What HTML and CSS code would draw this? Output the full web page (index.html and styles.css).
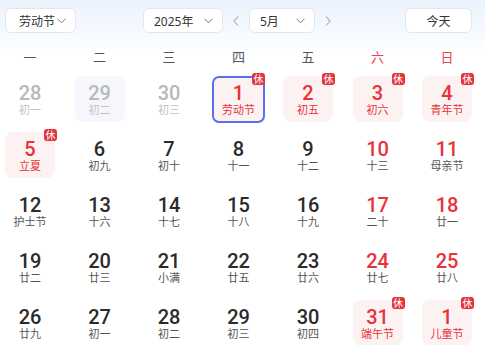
FILE: index.html
```html
<!DOCTYPE html>
<html lang="zh">
<head>
<meta charset="utf-8">
<link rel="stylesheet" href="styles.css">
</head>
<body>
<div class="cal">
  <div class="toolbar">
    <div class="select sel-holiday"><span>劳动节</span><svg class="caret" width="9" height="6" viewBox="0 0 9 6"><path d="M0.5 0.8 L4.5 4.8 L8.5 0.8" fill="none" stroke="#777" stroke-width="1"/></svg></div>
    <div class="select sel-year"><span>2025年</span><svg class="caret" width="9" height="6" viewBox="0 0 9 6"><path d="M0.5 0.8 L4.5 4.8 L8.5 0.8" fill="none" stroke="#777" stroke-width="1"/></svg></div>
    <div class="nav"><svg width="6" height="10" viewBox="0 0 6 10"><path d="M5 0.5 L1 5 L5 9.5" fill="none" stroke="#aaa" stroke-width="1.1"/></svg></div>
    <div class="select sel-month"><span>5月</span><svg class="caret" width="9" height="6" viewBox="0 0 9 6"><path d="M0.5 0.8 L4.5 4.8 L8.5 0.8" fill="none" stroke="#777" stroke-width="1"/></svg></div>
    <div class="nav"><svg width="6" height="10" viewBox="0 0 6 10"><path d="M1 0.5 L5 5 L1 9.5" fill="none" stroke="#aaa" stroke-width="1.1"/></svg></div>
    <div class="today">今天</div>
  </div>
  <div class="grid week">
    <div class="wd">一</div><div class="wd">二</div><div class="wd">三</div><div class="wd">四</div><div class="wd">五</div><div class="wd red">六</div><div class="wd red">日</div>
  </div>
  <div class="grid days">
    <div class="day other"><div class="num">28</div><div class="lunar">初一</div></div>
    <div class="day other hover"><div class="num">29</div><div class="lunar">初二</div></div>
    <div class="day other"><div class="num">30</div><div class="lunar">初三</div></div>
    <div class="day rest red selected"><div class="num">1</div><div class="lunar">劳动节</div><span class="badge">休</span></div>
    <div class="day rest red"><div class="num">2</div><div class="lunar">初五</div><span class="badge">休</span></div>
    <div class="day rest red"><div class="num">3</div><div class="lunar">初六</div><span class="badge">休</span></div>
    <div class="day rest red"><div class="num">4</div><div class="lunar">青年节</div><span class="badge">休</span></div>

    <div class="day rest red"><div class="num">5</div><div class="lunar">立夏</div><span class="badge">休</span></div>
    <div class="day"><div class="num">6</div><div class="lunar">初九</div></div>
    <div class="day"><div class="num">7</div><div class="lunar">初十</div></div>
    <div class="day"><div class="num">8</div><div class="lunar">十一</div></div>
    <div class="day"><div class="num">9</div><div class="lunar">十二</div></div>
    <div class="day red"><div class="num">10</div><div class="lunar">十三</div></div>
    <div class="day red"><div class="num">11</div><div class="lunar">母亲节</div></div>

    <div class="day"><div class="num">12</div><div class="lunar">护士节</div></div>
    <div class="day"><div class="num">13</div><div class="lunar">十六</div></div>
    <div class="day"><div class="num">14</div><div class="lunar">十七</div></div>
    <div class="day"><div class="num">15</div><div class="lunar">十八</div></div>
    <div class="day"><div class="num">16</div><div class="lunar">十九</div></div>
    <div class="day red"><div class="num">17</div><div class="lunar">二十</div></div>
    <div class="day red"><div class="num">18</div><div class="lunar">廿一</div></div>

    <div class="day"><div class="num">19</div><div class="lunar">廿二</div></div>
    <div class="day"><div class="num">20</div><div class="lunar">廿三</div></div>
    <div class="day"><div class="num">21</div><div class="lunar">小满</div></div>
    <div class="day"><div class="num">22</div><div class="lunar">廿五</div></div>
    <div class="day"><div class="num">23</div><div class="lunar">廿六</div></div>
    <div class="day red"><div class="num">24</div><div class="lunar">廿七</div></div>
    <div class="day red"><div class="num">25</div><div class="lunar">廿八</div></div>

    <div class="day"><div class="num">26</div><div class="lunar">廿九</div></div>
    <div class="day"><div class="num">27</div><div class="lunar">初一</div></div>
    <div class="day"><div class="num">28</div><div class="lunar">初二</div></div>
    <div class="day"><div class="num">29</div><div class="lunar">初三</div></div>
    <div class="day"><div class="num">30</div><div class="lunar">初四</div></div>
    <div class="day rest red"><div class="num">31</div><div class="lunar">端午节</div><span class="badge">休</span></div>
    <div class="day rest red"><div class="num">1</div><div class="lunar">儿童节</div><span class="badge">休</span></div>
  </div>
</div>
</body>
</html>
```

FILE: styles.css
```css
* { box-sizing: border-box; }
html, body { margin: 0; padding: 0; }
body {
  width: 485px;
  height: 345px;
  overflow: hidden;
  background: linear-gradient(180deg, #ecf3fd 0px, #f3f8fe 25px, #ffffff 55px);
  font-family: "Noto Sans", "Noto Sans CJK SC", sans-serif;
  color: #2a2a2a;
}
.cal { padding: 8px 13px 0 5px; }
.toolbar {
  display: flex;
  align-items: center;
  height: 25px;
}
.select, .today {
  height: 25px;
  background: #fff;
  border: 1px solid #e4e7ec;
  border-radius: 6px;
  display: flex;
  align-items: center;
  font-size: 12px;
  color: #333;
}
.select { justify-content: space-between; }
.sel-holiday { width: 71px; padding: 0 9px 0 13px; }
.sel-year { width: 80px; margin-left: 67px; padding: 0 9px 0 10px; }
.sel-month { width: 66px; margin-left: 5px; padding: 0 9px 0 10px; }
.caret { display: block; }
.nav {
  width: 16px;
  margin-left: 5px;
  display: flex;
  justify-content: center;
}
.nav svg { display: block; }
.today {
  margin-left: auto;
  width: 67px;
  justify-content: center;
}
.grid {
  display: grid;
  grid-template-columns: repeat(7, 50px);
  column-gap: 19.5px;
}
.week {
  margin-top: 13px;
  height: 22px;
  align-items: center;
}
.wd {
  text-align: center;
  font-size: 13px;
  color: #555;
  line-height: 22px;
}
.wd.red { color: #e8424a; }
.days {
  margin-top: 8px;
  row-gap: 10px;
  grid-auto-rows: 46px;
}
.day {
  position: relative;
  border-radius: 8px;
  display: flex;
  flex-direction: column;
  align-items: center;
  padding-top: 6px;
}
.num {
  font-family: Roboto, "Noto Sans", sans-serif;
  font-weight: 500;
  font-size: 20px;
  line-height: 22px;
  color: #2b2b2b;
}
.lunar {
  font-family: "Liberation Sans", "Noto Sans CJK SC", sans-serif;
  font-size: 11px;
  line-height: 12px;
  color: #555;
}
.day.red .num, .day.rest .lunar { color: #e8323c; }
.day.rest { background: #fdf2f2; }
.day.other .num { color: #b9b9b9; }
.day.other .lunar { color: #c2c2c2; }
.day.hover { background: #f5f7fd; }
.day.selected {
  border: 2px solid #5a6ff0;
  padding-top: 4px;
  width: 53px;
  margin-left: -1.5px;
  height: 47px;
  border-radius: 7px;
}
.badge {
  position: absolute;
  top: -3px;
  right: -2px;
  width: 13px;
  height: 12px;
  border-radius: 3px;
  background: #e5323b;
  color: #fff;
  font-size: 10px;
  line-height: 12px;
  text-align: center;
}
.day.selected .badge { top: -5px; right: -2px; }
```
